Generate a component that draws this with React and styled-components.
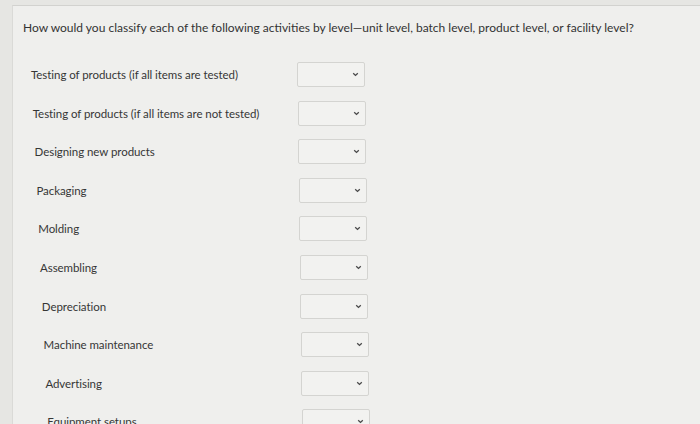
import React from 'react';
import styled, { createGlobalStyle } from 'styled-components';

const GlobalStyle = createGlobalStyle`
  html, body {
    margin: 0;
    padding: 0;
    background: #e6e6e3;
    font-family: Lato, "Open Sans", sans-serif;
    overflow: hidden;
  }
`;

const Page = styled.div`
  width: 700px;
  height: 424px;
  overflow: hidden;
  padding-top: 5px;
  box-sizing: border-box;
`;

const Card = styled.div`
  margin-left: 12px;
  height: 430px;
  background: #efefed;
  border-top: 1px solid #d2d2cf;
  border-left: 1px solid #dadad7;
  padding: 14px 0 0 10px;
  box-sizing: border-box;
`;

const Question = styled.p`
  margin: 0;
  font-size: 12px;
  line-height: 16px;
  color: #333333;
  letter-spacing: 0;
  white-space: nowrap;
`;

const List = styled.div`
  margin-top: 26px;
  display: flex;
  flex-direction: column;
  gap: 13.6px;
`;

const Row = styled.div`
  display: grid;
  grid-template-columns: 274px 70px;
  align-items: center;
  height: 25px;
`;

const Label = styled.span`
  padding-left: ${p => p.$indent}px;
  font-size: 11.5px;
  color: #363636;
  letter-spacing: -0.06px;
  white-space: nowrap;
`;

const Select = styled.div`
  margin-left: ${p => p.$shift}px;
  width: 68px;
  height: 25px;
  box-sizing: border-box;
  border: 1px solid #d4d4d1;
  border-radius: 2px;
  background: #f2f2f0;
  display: flex;
  align-items: center;
  justify-content: flex-end;
  padding-right: 5px;
`;

const Chevron = () => (
  <svg width="7" height="5" viewBox="0 0 7 5">
    <path d="M1.2 1.2 L3.5 3.4 L5.8 1.2" fill="none" stroke="#4a4a4a" strokeWidth="1.3" />
  </svg>
);

const activities = [
  'Testing of products (if all items are tested)',
  'Testing of products (if all items are not tested)',
  'Designing new products',
  'Packaging',
  'Molding',
  'Assembling',
  'Depreciation',
  'Machine maintenance',
  'Advertising',
  'Equipment setups',
];

function App() {
  return (
    <>
      <GlobalStyle />
      <Page>
        <Card>
          <Question>
            How would you classify each of the following activities by level—unit level, batch level, product level, or facility level?
          </Question>
          <List>
            {activities.map((a, i) => (
              <Row key={a}>
                <Label $indent={8 + i * 1.8}>{a}</Label>
                <Select $shift={Math.round(i * 0.5)}>
                  <Chevron />
                </Select>
              </Row>
            ))}
          </List>
        </Card>
      </Page>
    </>
  );
}

export default App;
